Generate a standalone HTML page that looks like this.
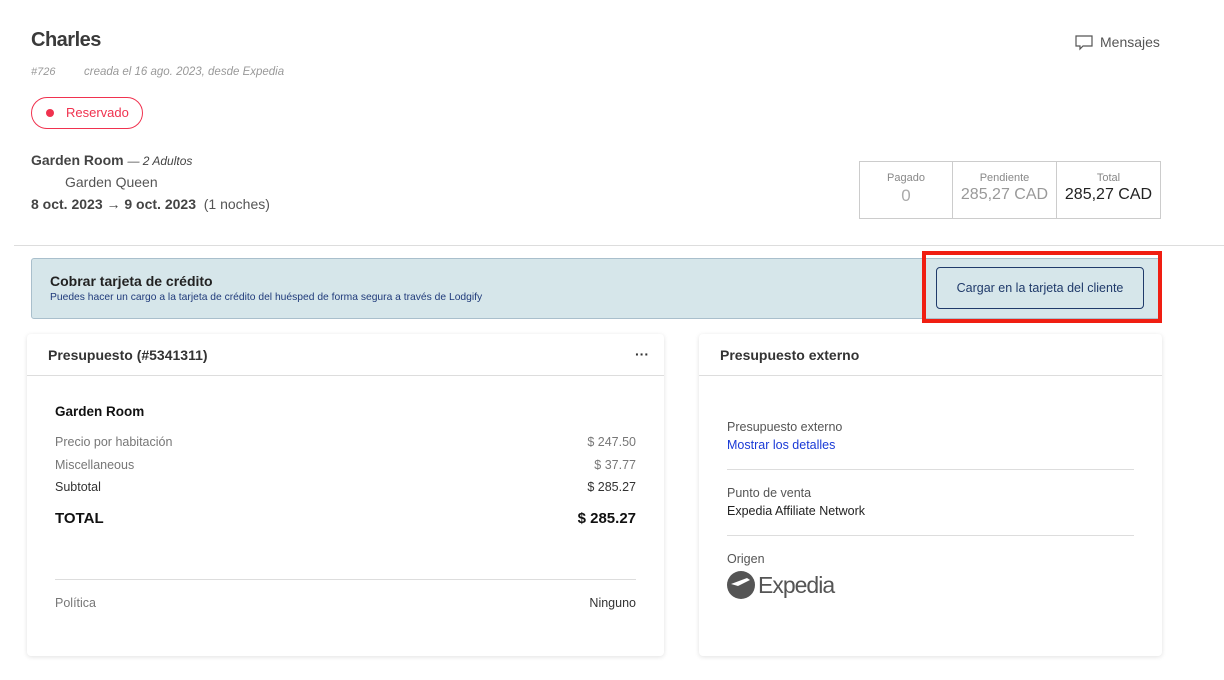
<!DOCTYPE html>
<html><head><meta charset="utf-8"><style>
*{margin:0;padding:0;box-sizing:border-box}
body{width:1224px;height:680px;background:#fff;font-family:"Liberation Sans",sans-serif;color:#333;position:relative;overflow:hidden}
.a{position:absolute;white-space:nowrap}
.card{position:absolute;background:#fff;border-radius:4px;box-shadow:0 1px 5px rgba(0,0,0,.12)}
.row{position:absolute;left:28px;right:28px;font-size:12.5px;color:#777;display:flex;justify-content:space-between}
</style></head><body>
<div class="a" style="left:31px;top:29px;font-size:20px;font-weight:bold;color:#3a3a3a;letter-spacing:-0.5px">Charles</div>
<div class="a" style="left:31px;top:66px;font-size:11px;font-style:italic;color:#999">#726</div>
<div class="a" style="left:84px;top:66px;font-size:11.5px;font-style:italic;color:#999">creada el 16 ago. 2023, desde Expedia</div>
<div class="a" style="left:31px;top:97px;width:112px;height:32px;border:1px solid #f0324f;border-radius:16px"></div>
<div class="a" style="left:46px;top:109px;width:8px;height:8px;border-radius:50%;background:#f0324f"></div>
<div class="a" style="left:66px;top:105px;font-size:13px;color:#f0324f">Reservado</div>
<div class="a" style="left:31px;top:152px;font-size:14px;color:#444"><b>Garden Room</b> <span style="font-size:12px;font-style:italic">— 2 Adultos</span></div>
<div class="a" style="left:65px;top:174px;font-size:14px;color:#555">Garden Queen</div>
<div class="a" style="left:31px;top:196px;font-size:14px;color:#444"><b>8 oct. 2023 → 9 oct. 2023</b> &nbsp;<span style="color:#555">(1 noches)</span></div>
<svg class="a" style="left:1075px;top:35px" width="18" height="16" viewBox="0 0 18 16"><path d="M1 1h16v10H8l-3 3v-3H1z" fill="none" stroke="#555" stroke-width="1.2"/></svg>
<div class="a" style="left:1100px;top:34px;font-size:14px;color:#555">Mensajes</div>
<div class="a" style="left:859px;top:161px;width:302px;height:58px;border:1px solid #ccc;display:flex">
 <div style="width:93px;border-right:1px solid #ccc;text-align:center"><div style="font-size:11px;color:#888;margin-top:10px">Pagado</div><div style="font-size:17px;color:#aaa;margin-top:2px">0</div></div>
 <div style="width:104px;border-right:1px solid #ccc;text-align:center"><div style="font-size:11px;color:#888;margin-top:10px">Pendiente</div><div style="font-size:16px;color:#999;margin-top:2px">285,27 CAD</div></div>
 <div style="flex:1;text-align:center"><div style="font-size:11px;color:#888;margin-top:10px">Total</div><div style="font-size:16px;color:#222;margin-top:2px">285,27 CAD</div></div>
</div>
<div class="a" style="left:14px;top:245px;width:1210px;height:1px;background:#ddd"></div>
<div class="a" style="left:31px;top:258px;width:1130px;height:61px;background:#d6e6ea;border:1px solid #a9bfcc;border-radius:3px"></div>
<div class="a" style="left:50px;top:273px;font-size:14px;font-weight:bold;color:#222">Cobrar tarjeta de crédito</div>
<div class="a" style="left:50px;top:292px;font-size:10.3px;color:#1f3a7a">Puedes hacer un cargo a la tarjeta de crédito del huésped de forma segura a través de Lodgify</div>
<div class="a" style="left:922px;top:251px;width:240px;height:72px;border:4px solid #f01e12"></div>
<div class="a" style="left:936px;top:267px;width:208px;height:42px;border:1px solid #1f3a6a;border-radius:4px;font-size:12.5px;color:#1f3a6a;text-align:center;line-height:40px">Cargar en la tarjeta del cliente</div>

<div class="card" style="left:27px;top:334px;width:637px;height:322px">
 <div class="a" style="left:21px;top:13px;font-size:14px;font-weight:bold;color:#333">Presupuesto (#5341311)</div>
 <div class="a" style="right:15px;top:12px;font-size:14px;font-weight:bold;color:#333">···</div>
 <div class="a" style="left:0;right:0;top:41px;height:1px;background:#ddd"></div>
 <div class="a" style="left:28px;top:70px;font-size:13.5px;font-weight:900;color:#111">Garden Room</div>
 <div class="row" style="top:101px"><span>Precio por habitación</span><span>$ 247.50</span></div>
 <div class="row" style="top:124px"><span>Miscellaneous</span><span>$ 37.77</span></div>
 <div class="row" style="top:146px;color:#333"><span>Subtotal</span><span>$ 285.27</span></div>
 <div class="row" style="top:176px;color:#111;font-size:15px;font-weight:900"><span>TOTAL</span><span>$ 285.27</span></div>
 <div class="a" style="left:28px;right:28px;top:245px;height:1px;background:#ddd"></div>
 <div class="row" style="top:262px"><span>Política</span><span style="color:#333">Ninguno</span></div>
</div>

<div class="card" style="left:699px;top:334px;width:463px;height:322px">
 <div class="a" style="left:21px;top:13px;font-size:14px;font-weight:bold;color:#333">Presupuesto externo</div>
 <div class="a" style="left:0;right:0;top:41px;height:1px;background:#ddd"></div>
 <div class="a" style="left:28px;top:86px;font-size:12.5px;color:#555">Presupuesto externo</div>
 <div class="a" style="left:28px;top:104px;font-size:12.5px;color:#1a3ad6">Mostrar los detalles</div>
 <div class="a" style="left:28px;right:28px;top:135px;height:1px;background:#ddd"></div>
 <div class="a" style="left:28px;top:152px;font-size:12.5px;color:#555">Punto de venta</div>
 <div class="a" style="left:28px;top:170px;font-size:12.5px;color:#222">Expedia Affiliate Network</div>
 <div class="a" style="left:28px;right:28px;top:201px;height:1px;background:#ddd"></div>
 <div class="a" style="left:28px;top:218px;font-size:12.5px;color:#555">Origen</div>
 <svg class="a" style="left:27px;top:236px" width="30" height="30" viewBox="0 0 30 30"><circle cx="15" cy="15" r="14" fill="#555"/><path d="M5 14l16-6 3 2-12 6z" fill="#fff"/></svg>
 <div class="a" style="left:59px;top:238px;font-size:23px;color:#555;letter-spacing:-1px">Expedia</div>
</div>
</body></html>
